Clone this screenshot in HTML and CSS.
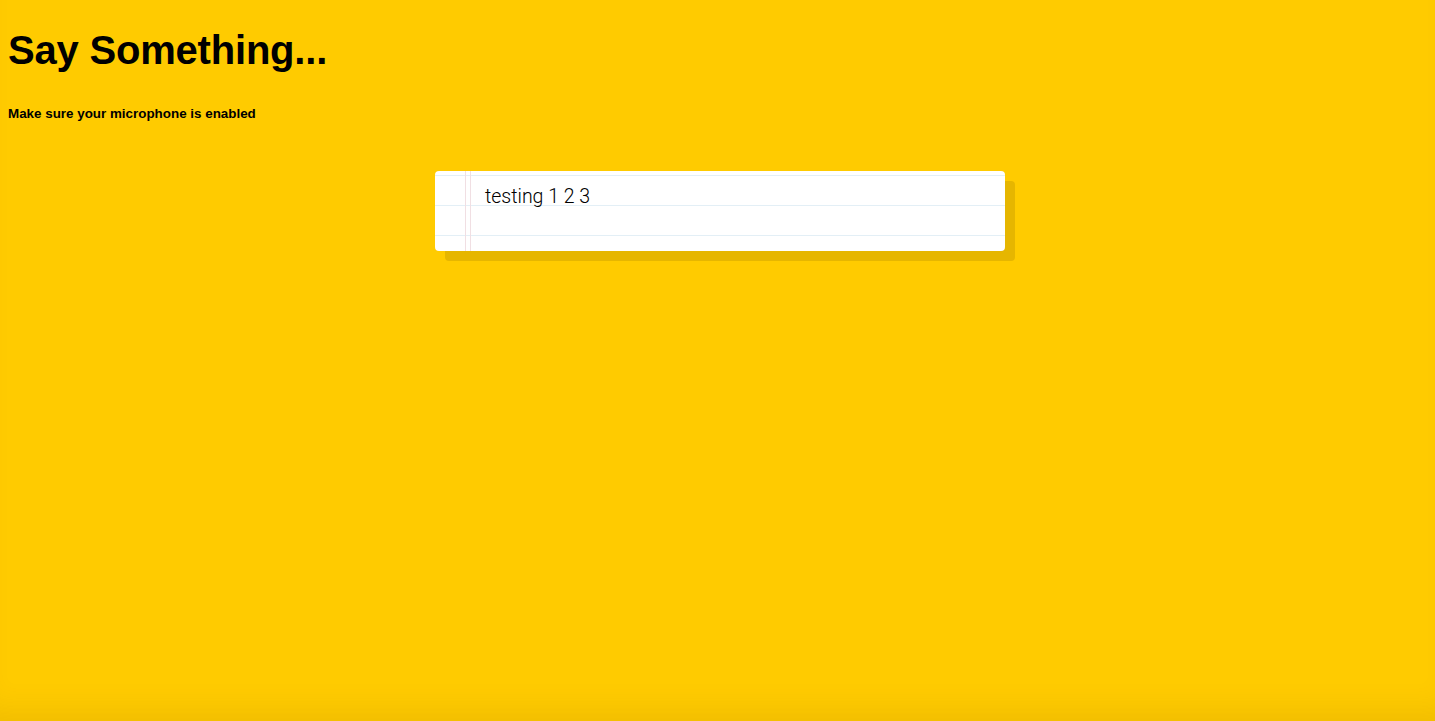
FILE: index.html
```html
<!DOCTYPE html>
<html lang="en">
<head>
<meta charset="utf-8">
<title>Say Something...</title>
<link rel="stylesheet" href="styles.css">
</head>
<body>
<div class="page">
  <h1 class="title">Say Something...</h1>
  <p class="hint">Make sure your microphone is enabled</p>
  <div class="card">
    <div class="card-text">testing 1 2 3</div>
  </div>
</div>
</body>
</html>
```
FILE: styles.css
```css
html, body {
  margin: 0;
  height: 100%;
}
body {
  background: #ffcb00;
  font-family: "Liberation Sans", Arial, sans-serif;
  color: #000;
  box-shadow: inset 0 -30px 30px -20px rgba(120, 80, 0, 0.12);
  overflow: hidden;
}
.page {
  padding: 8px;
}
.title {
  font-size: 40px;
  font-weight: bold;
  margin: 17px 0 0;
  line-height: 50px;
  letter-spacing: -0.2px;
}
.hint {
  font-size: 13.4px;
  font-weight: bold;
  margin: 31px 0 0;
  line-height: 16px;
}
.card {
  position: relative;
  width: 570px;
  height: 80px;
  margin: 49px 0 0 427px;
  background-color: #fff;
  background-image: linear-gradient(#e3eff6 1px, transparent 1px);
  background-size: 100% 30px;
  background-position: 0 4px;
  border-radius: 4px;
  box-shadow: 10px 10px 0 #e6b600;
}
.card::before {
  content: "";
  position: absolute;
  top: 0;
  bottom: 0;
  left: 30px;
  width: 4px;
  border-left: 1px solid #f1dfe3;
  border-right: 1px solid #f1dfe3;
}
.card-text {
  padding: 14px 0 0 50px;
  font-family: Roboto, "Liberation Sans", sans-serif;
  font-weight: 300;
  font-size: 19.5px;
  line-height: 24px;
}
```
